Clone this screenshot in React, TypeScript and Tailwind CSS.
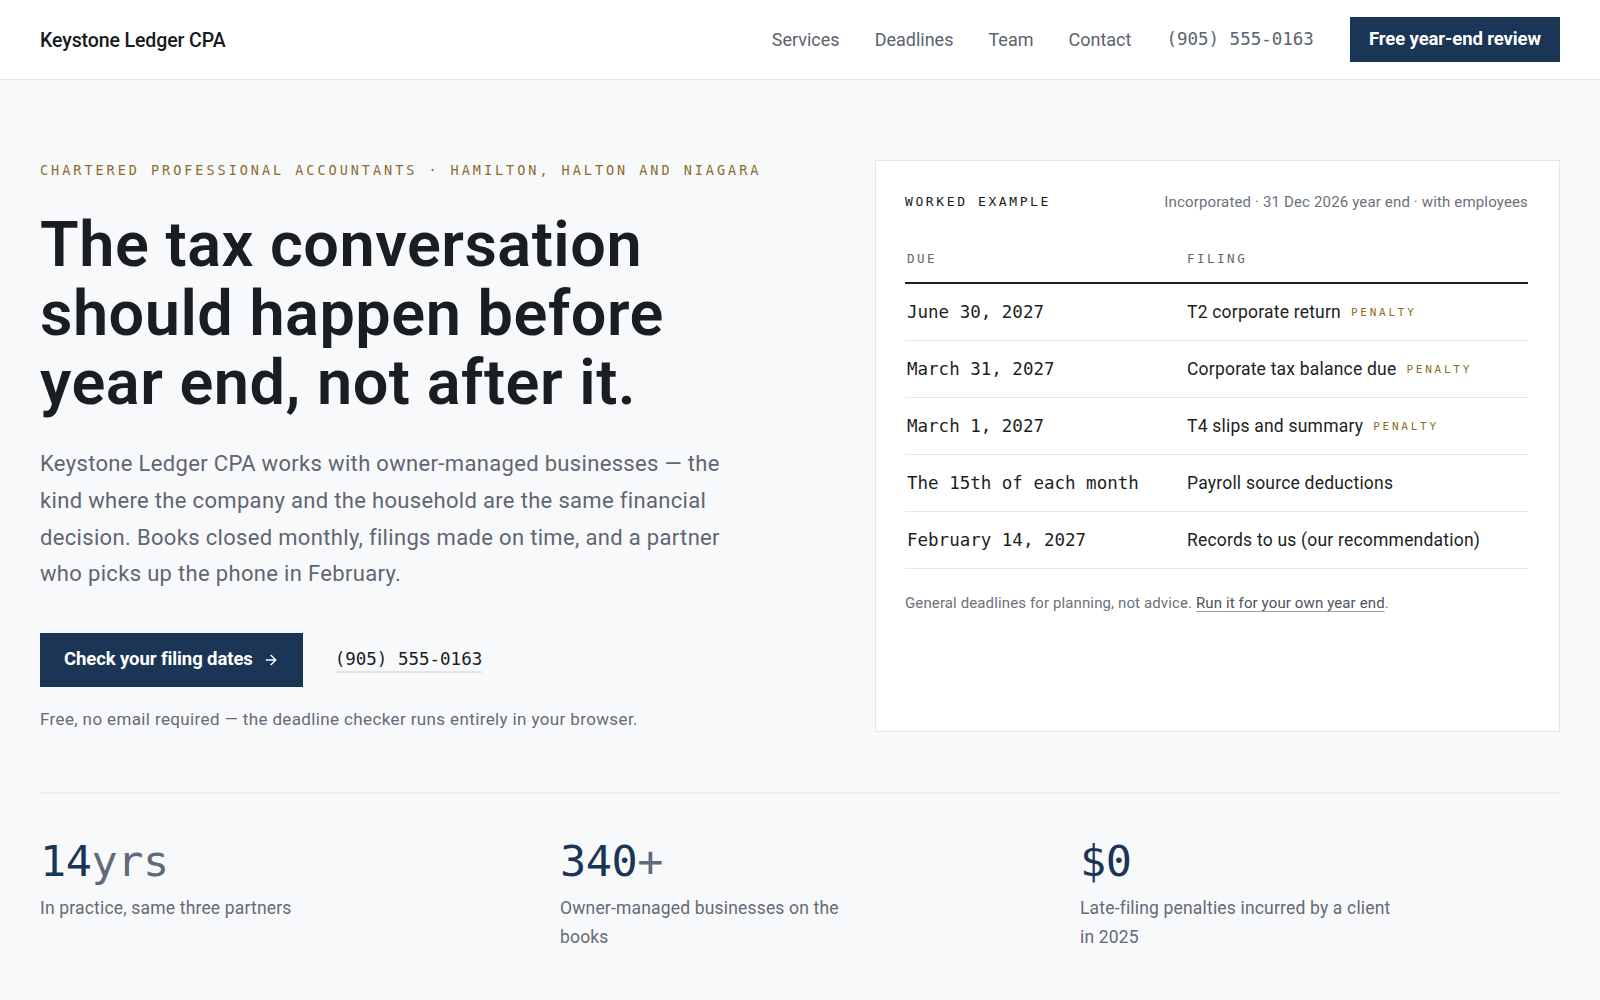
import React from "react";
import { ArrowRight } from "lucide-react";

const SANS = "font-['Roboto','Liberation_Sans',sans-serif]";
const MONO = "font-['DejaVu_Sans_Mono','Liberation_Mono',monospace]";

const rows: { due: string; filing: string; penalty: boolean }[] = [
  { due: "June 30, 2027", filing: "T2 corporate return", penalty: true },
  { due: "March 31, 2027", filing: "Corporate tax balance due", penalty: true },
  { due: "March 1, 2027", filing: "T4 slips and summary", penalty: true },
  { due: "The 15th of each month", filing: "Payroll source deductions", penalty: false },
  { due: "February 14, 2027", filing: "Records to us (our recommendation)", penalty: false },
];

export default function App() {
  return (
    <div className={`min-h-screen bg-[#f8f9fb] text-[#1b1e22] ${SANS}`}>
      <header className="h-20 bg-white border-b border-[#e3e6ea] px-10 flex items-center justify-between">
        <div className="pt-[3px] text-[19.5px] font-medium tracking-[-0.005em] text-[#16191d]">Keystone Ledger CPA</div>
        <nav className="flex items-center gap-[35px] text-[18px] text-[#5b636e]">
          <a>Services</a>
          <a>Deadlines</a>
          <a>Team</a>
          <a>Contact</a>
          <a className={`${MONO} text-[17.5px] text-[#5b636e]`}>(905) 555-0163</a>
          <a className="ml-[1px] h-[45px] px-[19px] flex items-center bg-[#1b3556] text-white text-[18.5px] font-bold tracking-[-0.005em]">
            Free year-end review
          </a>
        </nav>
      </header>

      <main className="px-10">
        <section className="pt-20 pb-[60px] grid grid-cols-[1fr_685px] gap-[64px] items-stretch">
          <div>
            <div className={`${MONO} text-[13.5px] leading-5 tracking-[0.22em] text-[#8a6d2b]`}>
              CHARTERED PROFESSIONAL ACCOUNTANTS · HAMILTON, HALTON AND NIAGARA
            </div>
            <h1 className="mt-[30px] text-[63px] leading-[69px] font-semibold tracking-[0.008em] text-[#1a1d21]">
              The tax conversation
              <br />
              should happen before
              <br />
              year end, not after it.
            </h1>
            <p className="mt-[29px] text-[22px] leading-[36.75px] tracking-[0.015em] text-[#5f6671]">
              Keystone Ledger CPA works with owner-managed businesses — the
              <br />
              kind where the company and the household are the same financial
              <br />
              decision. Books closed monthly, filings made on time, and a partner
              <br />
              who picks up the phone in February.
            </p>
            <div className="mt-10 flex items-center gap-8">
              <a className="h-[54px] px-6 flex items-center gap-[10px] bg-[#1b3556] text-white text-[18.5px] font-bold tracking-[-0.005em]">
                Check your filing dates
                <ArrowRight size={16} strokeWidth={2} />
              </a>
              <a className={`${MONO} text-[17.5px] text-[#1b1e22] border-b-2 border-[#e1e5ea] leading-[24px]`}>
                (905) 555-0163
              </a>
            </div>
            <p className="mt-[19px] text-[17px] leading-[26px] tracking-[0.022em] text-[#646b75]">
              Free, no email required — the deadline checker runs entirely in your browser.
            </p>
          </div>

          <div className="bg-white border border-[#e3e6ea] pl-[29px] pr-[31px] pt-[31px]">
            <div className="flex items-center justify-between">
              <div className={`${MONO} text-[13px] leading-5 tracking-[0.2em] text-[#16191d]`}>WORKED EXAMPLE</div>
              <div className="text-[15px] leading-5 tracking-[0.01em] text-[#6b717a]">
                Incorporated · 31 Dec 2026 year end · with employees
              </div>
            </div>
            <div className="mt-[37px]">
              <div className="grid grid-cols-[282px_1fr] pb-[13px] border-b-2 border-[#1b1e22]">
                <div className={`${MONO} text-[12.5px] leading-5 tracking-[0.2em] text-[#5f6671] pl-[2px]`}>DUE</div>
                <div className={`${MONO} text-[12.5px] leading-5 tracking-[0.2em] text-[#5f6671]`}>FILING</div>
              </div>
              {rows.map((r) => (
                <div key={r.due} className="grid grid-cols-[282px_1fr] h-[57px] items-center border-b border-[#e6e8eb]">
                  <div className={`${MONO} text-[17.5px] text-[#1b1e22] pl-[2px]`}>{r.due}</div>
                  <div className="flex items-center gap-[10px] text-[17.5px] tracking-[0.012em] text-[#1b1e22]">
                    <span>{r.filing}</span>
                    {r.penalty && (
                      <span className={`${MONO} text-[11px] tracking-[0.25em] text-[#8a6d2b] mt-[3px]`}>PENALTY</span>
                    )}
                  </div>
                </div>
              ))}
            </div>
            <p className="mt-[23px] text-[15px] leading-[22px] tracking-[0.008em] text-[#6b717a]">
              General deadlines for planning, not advice.{" "}
              <a className="underline underline-offset-[3px] decoration-[#9aa0a8] text-[#4d545e]">Run it for your own year end</a>.
            </p>
          </div>
        </section>

        <section className="border-t-2 border-[#eceef1] pt-[44px] pb-12 grid grid-cols-3 gap-10">
          <div>
            <div className={`${MONO} text-[43.5px] leading-[47px] text-[#1b3556] tracking-[-0.01em]`}>
              14<span className="text-[#5f6b7a]">yrs</span>
            </div>
            <p className="mt-[9px] text-[17.5px] leading-[29px] tracking-[0.01em] text-[#646b75]">In practice, same three partners</p>
          </div>
          <div>
            <div className={`${MONO} text-[43.5px] leading-[47px] text-[#1b3556] tracking-[-0.01em]`}>
              340<span className="text-[#5f6b7a]">+</span>
            </div>
            <p className="mt-[9px] text-[17.5px] leading-[29px] tracking-[0.01em] text-[#646b75]">
              Owner-managed businesses on the
              <br />
              books
            </p>
          </div>
          <div>
            <div className={`${MONO} text-[43.5px] leading-[47px] text-[#1b3556] tracking-[-0.01em]`}>$0</div>
            <p className="mt-[9px] text-[17.5px] leading-[29px] tracking-[0.01em] text-[#646b75]">
              Late-filing penalties incurred by a client
              <br />
              in 2025
            </p>
          </div>
        </section>
      </main>
    </div>
  );
}
